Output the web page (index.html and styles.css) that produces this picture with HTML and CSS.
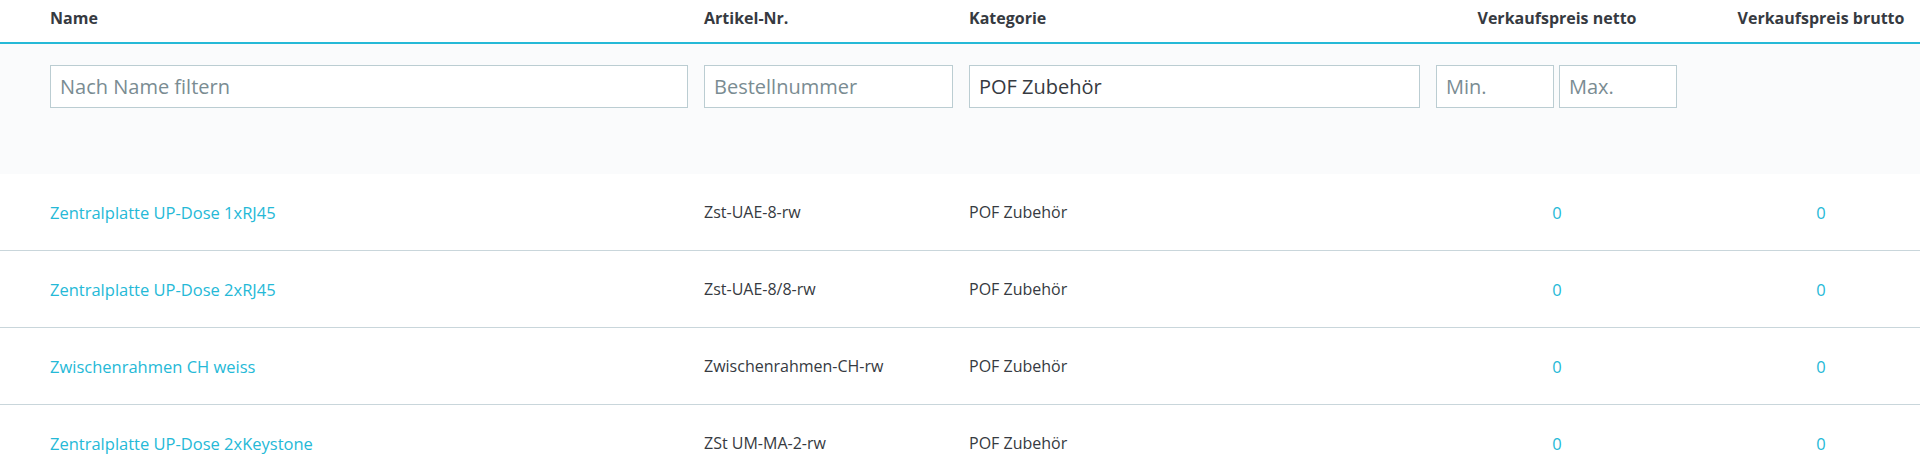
FILE: index.html
```html
<!DOCTYPE html>
<html lang="de">
<head>
<meta charset="utf-8">
<title>Produkte</title>
<link rel="stylesheet" href="styles.css">
</head>
<body>
<div class="grid">
  <div class="row head">
    <div class="cell">Name</div>
    <div class="cell">Artikel-Nr.</div>
    <div class="cell">Kategorie</div>
    <div class="cell center">Verkaufspreis netto</div>
    <div class="cell center last">Verkaufspreis brutto</div>
  </div>
  <div class="row filters">
    <div class="cell"><input class="field" type="text" placeholder="Nach Name filtern"></div>
    <div class="cell"><input class="field" type="text" placeholder="Bestellnummer"></div>
    <div class="cell"><input class="field" type="text" value="POF Zubehör"></div>
    <div class="cell pair"><input class="field" type="text" placeholder="Min."><input class="field" type="text" placeholder="Max."></div>
    <div class="cell last"></div>
  </div>
  <div class="row item">
    <div class="cell"><a class="link" href="#">Zentralplatte UP-Dose 1xRJ45</a></div>
    <div class="cell">Zst-UAE-8-rw</div>
    <div class="cell">POF Zubehör</div>
    <div class="cell center"><a class="link" href="#">0</a></div>
    <div class="cell center last"><a class="link" href="#">0</a></div>
  </div>
  <div class="row item">
    <div class="cell"><a class="link" href="#">Zentralplatte UP-Dose 2xRJ45</a></div>
    <div class="cell">Zst-UAE-8/8-rw</div>
    <div class="cell">POF Zubehör</div>
    <div class="cell center"><a class="link" href="#">0</a></div>
    <div class="cell center last"><a class="link" href="#">0</a></div>
  </div>
  <div class="row item">
    <div class="cell"><a class="link" href="#">Zwischenrahmen CH weiss</a></div>
    <div class="cell">Zwischenrahmen-CH-rw</div>
    <div class="cell">POF Zubehör</div>
    <div class="cell center"><a class="link" href="#">0</a></div>
    <div class="cell center last"><a class="link" href="#">0</a></div>
  </div>
  <div class="row item">
    <div class="cell"><a class="link" href="#">Zentralplatte UP-Dose 2xKeystone</a></div>
    <div class="cell">ZSt UM-MA-2-rw</div>
    <div class="cell">POF Zubehör</div>
    <div class="cell center"><a class="link" href="#">0</a></div>
    <div class="cell center last"><a class="link" href="#">0</a></div>
  </div>
</div>
</body>
</html>
```
FILE: styles.css
```css
* { box-sizing: border-box; }
html, body { margin: 0; padding: 0; background: #ffffff; }
body {
  font-family: "Open Sans", "Noto Sans", sans-serif;
  font-size: 16px;
  color: #363a41;
  overflow: hidden;
}
.grid { width: 1920px; }
.row {
  display: grid;
  grid-template-columns: 42px 654px 265px 467px 258px 234px;
}
.row::before { content: ""; }
.cell { padding: 0 8px; min-width: 0; white-space: nowrap; }
.center { text-align: center; }
.last { padding-left: 44px; padding-right: 8px; }

.head {
  height: 44px;
  border-bottom: 2px solid #25b9d7;
  font-weight: 700;
  font-size: 16px;
}
.head .cell { padding-top: 7px; line-height: 22px; }

.filters {
  background: #fafbfc;
  height: 130px;
  padding-top: 21px;
}
.field {
  display: block;
  width: 100%;
  height: 43px;
  border: 1px solid #bbcdd2;
  background: #ffffff;
  font-family: "Open Sans", "Noto Sans", sans-serif;
  font-size: 20px;
  color: #363a41;
  padding: 0 9px;
  outline: none;
}
.field::placeholder { color: #7a8c92; opacity: 1; }
.pair { display: flex; gap: 5px; }
.pair .field { width: 118px; }

.item {
  height: 77px;
  border-bottom: 1px solid #c9d6db;
  align-items: center;
}
.link { color: #25b9d7; text-decoration: none; font-size: 16.5px; }
```
